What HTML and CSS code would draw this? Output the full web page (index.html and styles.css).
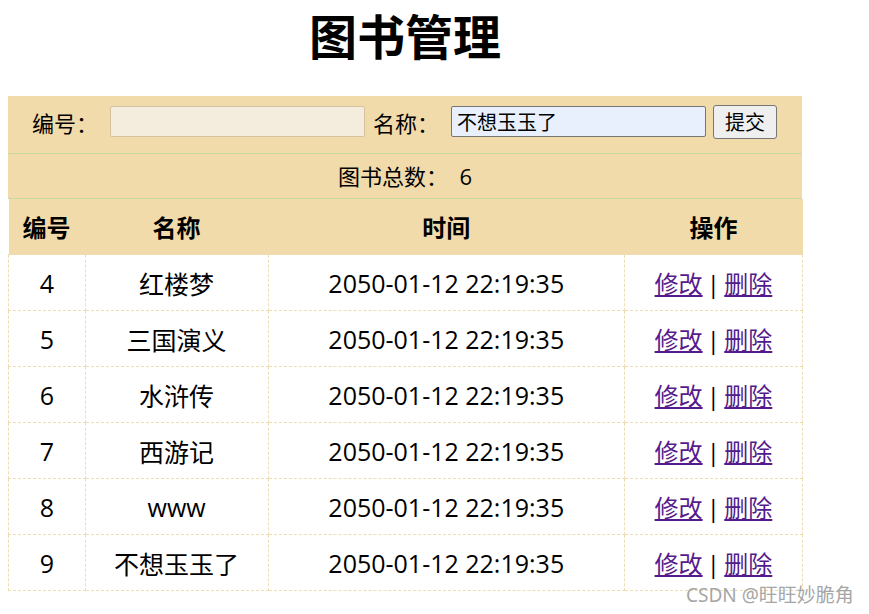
FILE: index.html
```html
<!DOCTYPE html>
<html lang="zh">
<head>
    <meta charset="UTF-8">
    <title>图书管理</title>
    <link rel="stylesheet" href="styles.css">
</head>
<body>
    <div class="wrap">
        <h1>图书管理</h1>

        <div class="panel">
            <div class="form-row">
                <label>编号：</label>
                <input type="text" class="ipt ipt-id" disabled>
                <label>名称：</label>
                <input type="text" class="ipt ipt-name" value="不想玉玉了">
                <button class="btn">提交</button>
            </div>
            <div class="count-row">图书总数：&nbsp; 6</div>
        </div>

        <table class="books">
            <thead>
                <tr>
                    <th class="c-id">编号</th>
                    <th class="c-name">名称</th>
                    <th class="c-time">时间</th>
                    <th class="c-op">操作</th>
                </tr>
            </thead>
            <tbody>
                <tr><td>4</td><td>红楼梦</td><td>2050-01-12 22:19:35</td><td class="ops"><a href="#">修改</a> | <a href="#">删除</a></td></tr>
                <tr><td>5</td><td>三国演义</td><td>2050-01-12 22:19:35</td><td class="ops"><a href="#">修改</a> | <a href="#">删除</a></td></tr>
                <tr><td>6</td><td>水浒传</td><td>2050-01-12 22:19:35</td><td class="ops"><a href="#">修改</a> | <a href="#">删除</a></td></tr>
                <tr><td>7</td><td>西游记</td><td>2050-01-12 22:19:35</td><td class="ops"><a href="#">修改</a> | <a href="#">删除</a></td></tr>
                <tr><td>8</td><td>www</td><td>2050-01-12 22:19:35</td><td class="ops"><a href="#">修改</a> | <a href="#">删除</a></td></tr>
                <tr><td>9</td><td>不想玉玉了</td><td>2050-01-12 22:19:35</td><td class="ops"><a href="#">修改</a> | <a href="#">删除</a></td></tr>
            </tbody>
        </table>
    </div>

    <div class="mark">CSDN @旺旺妙脆角</div>
</body>
</html>
```

FILE: styles.css
```css
body {
    margin: 0 8px;
    font-family: "Open Sans", "Noto Sans CJK SC", sans-serif;
    color: #000;
    background: #fff;
}
.wrap {
    width: 794px;
}
h1 {
    margin: 0 0 28px;
    height: 68px;
    line-height: 68px;
    font-family: "Noto Sans CJK SC", sans-serif;
    font-size: 48px;
    font-weight: bold;
    text-align: center;
}
.panel {
    background: #f2dbab;
}
.form-row {
    height: 51px;
    padding-bottom: 6px;
    display: flex;
    align-items: center;
    padding-left: 24px;
    border-bottom: 1px solid #c9d89e;
    font-size: 22px;
}
.form-row label {
    margin-right: 12px;
}
.ipt {
    box-sizing: border-box;
    width: 255px;
    height: 31px;
    padding: 0 5px;
    font-family: inherit;
    font-size: 20px;
    border: 1px solid #767676;
    border-radius: 2px;
    margin-right: 8px;
}
.ipt-id {
    background: #f4ecdd;
    border-color: #d4c3a0;
}
.ipt-name {
    background: #e8f0fe;
    color: #000;
}
.btn {
    height: 34px;
    width: 64px;
    margin-left: -1px;
    font-family: inherit;
    font-size: 20px;
    background: #efefef;
    border: 1px solid #767676;
    border-radius: 3px;
    color: #000;
    padding: 0;
}
.count-row {
    height: 44px;
    line-height: 44px;
    text-align: center;
    font-size: 22px;
    border-bottom: 1px solid #c9d89e;
}
.books {
    width: 795px;
    border-collapse: collapse;
    font-size: 25px;
}
.books th,
.books td {
    height: 55px;
    padding: 0;
    text-align: center;
    border: 1px dashed #eedcb2;
}
.books thead th {
    background: #f2dbab;
    font-size: 24px;
    font-weight: bold;
    border-top: none;
}
.books thead th:first-child {
    border-left: none;
}
.c-id { width: 76px; }
.c-name { width: 182px; }
.c-time { width: 355px; }
.c-op { width: 177px; }
.books .ops {
    font-size: 24px;
    word-spacing: -2px;
}
.books a {
    color: #551a8b;
}
.mark {
    position: absolute;
    left: 686px;
    top: 580px;
    font-family: "Noto Sans", "Noto Sans CJK SC", sans-serif;
    font-size: 19px;
    color: #a6a6a6;
}
```
